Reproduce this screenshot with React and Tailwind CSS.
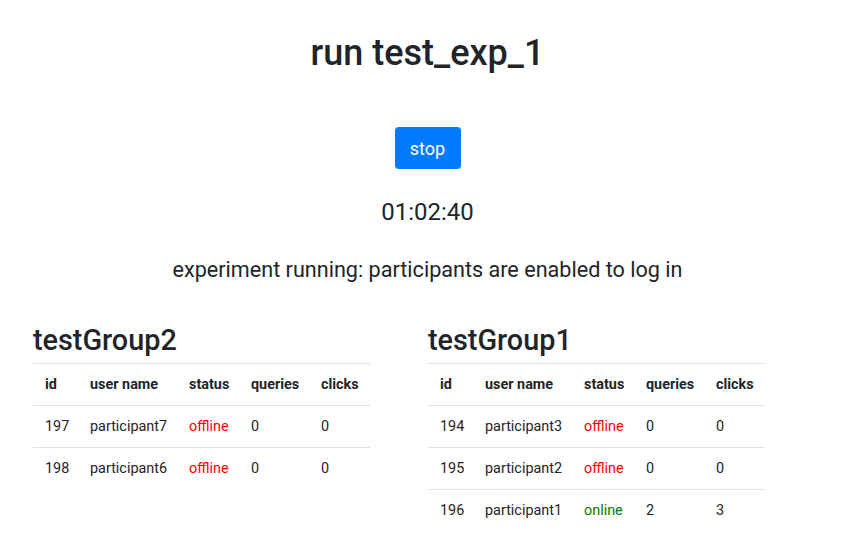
export default function App() {
  const g2 = [
    ["197", "participant7", "offline", "0", "0"],
    ["198", "participant6", "offline", "0", "0"],
  ];
  const g1 = [
    ["194", "participant3", "offline", "0", "0"],
    ["195", "participant2", "offline", "0", "0"],
    ["196", "participant1", "online", "2", "3"],
  ];
  const widths = ["w-[45px]", "w-[99px]", "w-[62px]", "w-[70px]", "w-[61px]"];
  const Table = ({ name, rows }) => (
    <div className="w-[337px]">
      <h3 className="text-[28.8px] font-medium leading-[1.2] h-[43px] pt-[3px]">{name}</h3>
      <table className="w-[337px] border-collapse table-fixed text-[14.4px]">
        <thead>
          <tr className="h-[42px] border-t border-b border-[#dee2e6]">
            {["id", "user name", "status", "queries", "clicks"].map((h, i) => (
              <th key={h} className={`${widths[i]} text-left font-bold px-[12px] py-0`}>{h}</th>
            ))}
          </tr>
        </thead>
        <tbody>
          {rows.map((r, ri) => (
            <tr key={r[0]} className={`h-[42px] ${ri < rows.length - 1 ? "border-b border-[#dee2e6]" : ""}`}>
              {r.map((c, i) => (
                <td
                  key={i}
                  className={`px-[12px] py-0 ${
                    i === 2 ? (c === "online" ? "text-[#008000]" : "text-[#ff0000]") : ""
                  }`}
                >
                  {c}
                </td>
              ))}
            </tr>
          ))}
        </tbody>
      </table>
    </div>
  );
  return (
    <div
      className="w-[865px] h-[537px] bg-white text-[#212529] overflow-hidden"
      style={{ fontFamily: "Roboto, 'Liberation Sans', sans-serif" }}
    >
      <div className="w-[855px] flex flex-col items-center">
        <h1 className="mt-[32px] text-[36px] font-medium leading-[1.2]">run test_exp_1</h1>
        <button className="mt-[52px] w-[66px] h-[42px] rounded-[4px] bg-[#007bff] text-white text-[18px]">
          stop
        </button>
        <div className="mt-[29px] text-[24px] leading-[1.2]">01:02:40</div>
        <div className="mt-[30px] text-[21.6px] leading-[26px]">
          experiment running: participants are enabled to log in
        </div>
      </div>
      <div className="flex pl-[33px] gap-[58px] mt-[37px]">
        <Table name="testGroup2" rows={g2} />
        <Table name="testGroup1" rows={g1} />
      </div>
    </div>
  );
}
